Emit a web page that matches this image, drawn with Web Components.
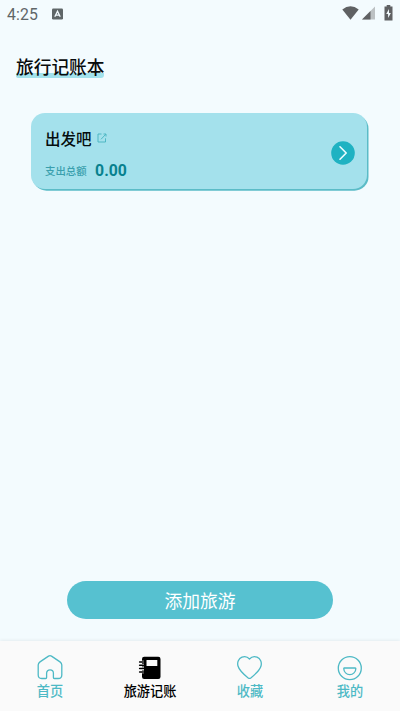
<!DOCTYPE html>
<html lang="zh-CN">
<head>
<meta charset="utf-8">
<title>旅行记账本</title>
<style>
html, body { margin: 0; height: 100%; }
body { font-family: Roboto, "Noto Sans CJK SC", sans-serif; background: #f3fbfe; overflow: hidden; }
</style>
</head>
<body>
<travel-app></travel-app>
<script>
function define(name, html) {
  const t = document.createElement('template');
  t.innerHTML = html;
  customElements.define(name, class extends HTMLElement {
    constructor() {
      super();
      this.attachShadow({ mode: 'open' }).appendChild(t.content.cloneNode(true));
    }
  });
}

define('status-bar', `
<style>
:host { display: flex; align-items: center; height: 28px; padding: 1px 7px 0 7px; box-sizing: border-box; color: #5f6668; font-size: 15.8px; line-height: 27px; letter-spacing: .1px; }
svg { display: block; }
.badge { margin-left: 14.5px; margin-bottom: 1px; }
.wifi { margin-left: auto; margin-bottom: 3px; }
.signal { margin-left: 3px; margin-bottom: 3px; }
.battery { margin-left: 9px; margin-bottom: 3px; }
</style>
<slot></slot>
<svg class="badge" width="11" height="12" viewBox="0 0 11 12"><rect y=".5" width="11" height="11" rx="1.2" fill="#5f6668"/><path d="M2.8 8.7 5.5 3.2 8.2 8.7M4 7.2h3" fill="none" stroke="#f3fbfe" stroke-width="1.3"/></svg>
<svg class="wifi" width="17" height="14" viewBox="0 0 17 14"><path d="M.3 3.5Q8.5-2.9 16.7 3.5L8.5 13.7Z" fill="#5f6163"/></svg>
<svg class="signal" width="13" height="14" viewBox="0 0 13 14"><path d="M0 13.5 13 .5v13Z" fill="#bcc1c3"/><path d="M0 13.5 8.5 5v8.5Z" fill="#5f6163"/></svg>
<svg class="battery" width="9" height="16" viewBox="0 0 9 16"><path d="M2.7 0h3.6v1.6H8.5V15.5H.5V1.6h2.2Z" fill="#5f6163"/><path d="M5 4 2.2 9h1.9v4L6.9 8H5Z" fill="#f3fbfe"/></svg>
`);

define('page-title', `
<style>
:host { display: flex; padding: 27px 16px 0; }
h1 { margin: 0; font-size: 17.7px; font-weight: 500; line-height: 26px; height: 23px; color: #080b0c; background: linear-gradient(#a2e2ec, #a2e2ec) 0 100% / 100% 5px no-repeat; border-radius: 0 0 3px 2px; }
</style>
<h1><slot></slot></h1>
`);

define('arrow-button', `
<style>:host, svg { display: block; }</style>
<svg width="24" height="24" viewBox="0 0 24 24"><circle cx="12" cy="12" r="11.8" fill="#1fb2c2"/><path d="m9 5.8 6.2 6.2L9 18.2" fill="none" stroke="#eefcff" stroke-width="1.6" stroke-linecap="round" stroke-linejoin="round"/></svg>
`);

define('trip-card', `
<style>
:host { display: flex; align-items: center; justify-content: space-between; margin: 35px 33px 0 31px; height: 76px; padding: 3px 12px 0 14px; box-sizing: border-box; border-radius: 14px; background: #a4e1ec; box-shadow: 1.5px 1.7px 0 #5bbcc7; }
.text { padding-top: 3px; }
.name { display: flex; align-items: center; gap: 5px; height: 26px; font-size: 15.5px; font-weight: 500; color: #050d0e; }
.total { display: flex; align-items: center; margin-top: 7px; height: 26px; font-size: 10.4px; font-weight: 500; color: #3a9fad; }
.amount { margin-left: 8.5px; font-size: 15.8px; font-weight: 700; color: #08818f; }
svg { display: block; }
</style>
<div class="text">
  <div class="name"><slot name="name"></slot>
    <svg width="10" height="10" viewBox="0 0 10 10" fill="none" stroke="#45b3c0" stroke-width=".9"><path d="M4.5 1H1v8h7.5V5.3M4 6.3 8.8 1.2M6.5 1H9v2.5"/></svg>
  </div>
  <div class="total"><slot name="label"></slot><span class="amount"><slot name="amount"></slot></span></div>
</div>
<arrow-button></arrow-button>
`);

define('primary-button', `
<style>
:host { display: block; margin: auto 67px 22px; }
button { display: block; width: 100%; height: 38px; border: 0; border-radius: 19px; padding: 3px 0 0; background: #56c1d0; color: #fff; font: 400 17.8px/35px Roboto, "Noto Sans CJK SC", sans-serif; }
</style>
<button><slot></slot></button>
`);

define('tab-item', `
<style>
:host { display: flex; flex-direction: column; align-items: center; color: #4db9c5; font-size: 13.2px; font-weight: 500; line-height: 22px; padding-top: 13px; }
:host([active]) { color: #000; }
::slotted(svg) { display: block; }
</style>
<slot name="icon"></slot><span><slot></slot></span>
`);

define('tab-bar', `
<style>
:host { display: grid; grid-template-columns: repeat(4, 1fr); height: 70px; background: #fafafa; box-shadow: 0 -1px 3px rgba(0,0,0,.06); }
</style>
<slot></slot>
`);

define('travel-app', `
<style>
:host { display: flex; flex-direction: column; height: 711px; background: #f3fbfe; }
</style>
<status-bar>4:25</status-bar>
<page-title>旅行记账本</page-title>
<trip-card><span slot="name">出发吧</span><span slot="label">支出总额</span><span slot="amount">0.00</span></trip-card>
<primary-button>添加旅游</primary-button>
<tab-bar>
  <tab-item><svg slot="icon" width="26" height="27" viewBox="0 0 26 27" fill="none" stroke="#4db9c5" stroke-width="1.3" stroke-linejoin="round"><path d="M11.5 2.1Q13 1.1 14.5 2.1L23 7.9Q24.8 9.2 24.8 11V21Q24.8 24.5 21.3 24.5H17.2Q16.4 24.5 16.4 23.6V19.2A3.4 3.4 0 0 0 9.6 19.2V23.6Q9.6 24.5 8.8 24.5H4.7Q1.2 24.5 1.2 21V11Q1.2 9.2 3 7.9Z"/></svg>首页</tab-item>
  <tab-item active><svg slot="icon" width="26" height="27" viewBox="0 0 26 27"><rect x="5" y="2.7" width="18.5" height="22.3" rx="2.2"/><rect x="9.5" y="6" width="10.8" height="6" fill="#fafafa"/><path d="M2 8h5M2 11.3h5M2 14.6h5M2 17.9h5" stroke="#fafafa" stroke-width="2.6"/><path d="M2.6 8h4M2.6 11.3h4M2.6 14.6h4M2.6 17.9h4" stroke="#000" stroke-width="1.5" stroke-linecap="round"/></svg>旅游记账</tab-item>
  <tab-item><svg slot="icon" width="26" height="27" viewBox="0 0 26 27" fill="none" stroke="#4db9c5" stroke-width="1.3" stroke-linejoin="round"><path d="M12.5 5C10.5 2.8 7.5 2.3 5 3.2 1.5 4.5 0 8.3 1 12 2.4 17 7.5 20.9 11.2 23.9Q12.5 24.9 13.8 23.9C17.5 20.9 22.6 17 24 12 25 8.3 23.5 4.5 20 3.2 17.5 2.3 14.5 2.8 12.5 5Z"/></svg>收藏</tab-item>
  <tab-item><svg slot="icon" width="26" height="27" viewBox="0 0 26 27" fill="none" stroke="#4db9c5" stroke-width="1.3" stroke-linejoin="round"><circle cx="12.8" cy="14.2" r="11.5"/><path d="M7.2 14H18.2Q18.9 14 18.8 14.7A6 5.9 0 0 1 6.8 14.7Q6.7 14 7.2 14Z"/></svg>我的</tab-item>
</tab-bar>
`);
</script>
</body>
</html>
